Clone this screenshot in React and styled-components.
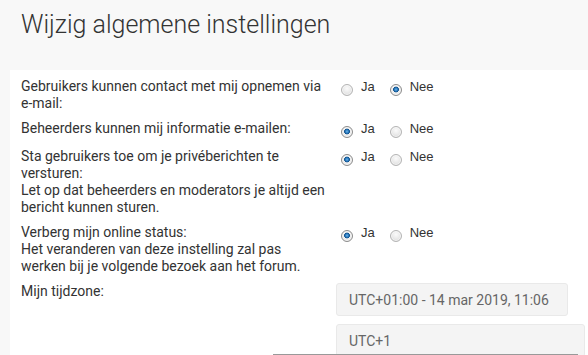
import React from 'react';
import styled, { createGlobalStyle } from 'styled-components';

const Global = createGlobalStyle`
  html, body { margin: 0; padding: 0; background: #f8f8f8; }
  body { font-family: Roboto, "Liberation Sans", sans-serif; color: #333; overflow: hidden; }
`;

const Page = styled.div`
  position: relative;
  width: 588px;
  height: 355px;
  overflow: hidden;
`;

const Title = styled.h2`
  margin: 0;
  padding: 8px 0 0 21px;
  height: 70px;
  box-sizing: border-box;
  font-family: Roboto, sans-serif;
  font-weight: 300;
  font-size: 25px;
  line-height: 34px;
  color: #333;
`;

const Panel = styled.div`
  margin-left: 10px;
  background: #fff;
  padding: 4px 0 20px 11px;
  min-height: 300px;
`;

const Row = styled.div`
  display: grid;
  grid-template-columns: 305px 1fr;
  column-gap: 10px;
  padding: 4px 0;
`;

const Label = styled.div`
  font-size: 14px;
  line-height: 17px;
  color: #333;
`;

const Field = styled.div`
  display: flex;
  flex-direction: column;
  gap: 8px;
`;

const Choices = styled.div`
  display: flex;
  align-items: flex-start;
  gap: 15px;
  padding-left: 5px;
  height: 20px;
`;

const Choice = styled.label`
  display: flex;
  align-items: flex-start;
  gap: 8px;
  font-family: "Liberation Sans", Arial, sans-serif;
  font-size: 13px;
  line-height: 17px;
  color: #333;
`;

const Radio = styled.span`
  box-sizing: border-box;
  width: 12px;
  height: 12px;
  margin-top: 6px;
  border-radius: 50%;
  border: 1px solid ${p => (p.$on ? '#8c8c8c' : '#b4b4b4')};
  background: ${p =>
    p.$on
      ? 'radial-gradient(circle at 50% 45%, #6fb3e6 0, #2a7bbf 1.6px, #0f4f8a 2.6px, #f0f0f0 3.2px, #d6d6d6 100%)'
      : 'radial-gradient(circle at 50% 35%, #fbfbfb 0, #e6e6e6 60%, #cfcfcf 100%)'};
  box-shadow: inset 0 0 0 1px rgba(255,255,255,0.6);
`;

const Select = styled.div`
  box-sizing: border-box;
  width: ${p => p.$w}px;
  height: 33px;
  background: #f4f4f4;
  border: 1px solid #e9e9e9;
  border-radius: 3px;
  padding-left: 12px;
  display: flex;
  align-items: center;
  font-size: 14px;
  color: #666;
`;

const Rule = styled.div`
  position: absolute;
  left: 273px;
  top: 353px;
  width: 305px;
  height: 1px;
  border-bottom: 1px solid #999;
`;

function YesNo({ value }) {
  return (
    <Choices>
      <Choice>
        <Radio $on={value === 'ja'} />
        Ja
      </Choice>
      <Choice>
        <Radio $on={value === 'nee'} />
        Nee
      </Choice>
    </Choices>
  );
}

const rows = [
  { label: ['Gebruikers kunnen contact met mij opnemen via e-mail:'], value: 'nee' },
  { label: ['Beheerders kunnen mij informatie e-mailen:'], value: 'ja' },
  {
    label: [
      'Sta gebruikers toe om je privéberichten te versturen:',
      'Let op dat beheerders en moderators je altijd een bericht kunnen sturen.',
    ],
    value: 'ja',
  },
  {
    label: [
      'Verberg mijn online status:',
      'Het veranderen van deze instelling zal pas werken bij je volgende bezoek aan het forum.',
    ],
    value: 'ja',
  },
];

export default function App() {
  return (
    <Page>
      <Global />
      <Title>Wijzig algemene instellingen</Title>
      <Panel>
        {rows.map((r, i) => (
          <Row key={i}>
            <Label>
              {r.label.map((t, j) => (
                <div key={j}>{t}</div>
              ))}
            </Label>
            <YesNo value={r.value} />
          </Row>
        ))}
        <Row>
          <Label>Mijn tijdzone:</Label>
          <Field>
            <Select $w={232}>UTC+01:00 - 14 mar 2019, 11:06</Select>
            <Select $w={249}>UTC+1</Select>
          </Field>
        </Row>
      </Panel>
      <Rule />
    </Page>
  );
}
